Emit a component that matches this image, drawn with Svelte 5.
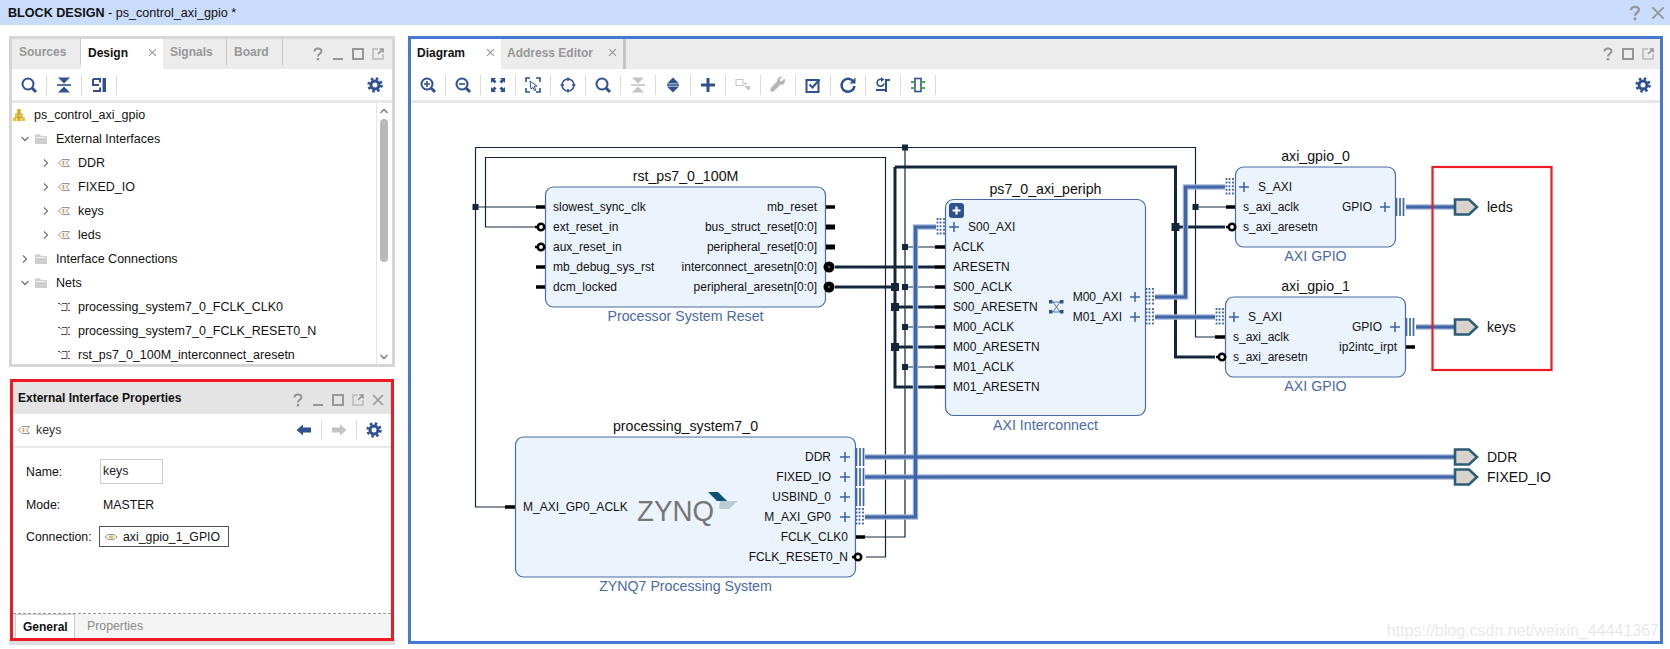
<script>
  const treeRows = [
    { lvl: 0, icon: 'root', text: 'ps_control_axi_gpio' },
    { lvl: 1, arrow: 'down', icon: 'folder', text: 'External Interfaces' },
    { lvl: 2, arrow: 'right', icon: 'port', text: 'DDR' },
    { lvl: 2, arrow: 'right', icon: 'port', text: 'FIXED_IO' },
    { lvl: 2, arrow: 'right', icon: 'port', text: 'keys' },
    { lvl: 2, arrow: 'right', icon: 'port', text: 'leds' },
    { lvl: 1, arrow: 'right', icon: 'folder', text: 'Interface Connections' },
    { lvl: 1, arrow: 'down', icon: 'folder', text: 'Nets' },
    { lvl: 2, icon: 'net', text: 'processing_system7_0_FCLK_CLK0' },
    { lvl: 2, icon: 'net', text: 'processing_system7_0_FCLK_RESET0_N' },
    { lvl: 2, icon: 'net', text: 'rst_ps7_0_100M_interconnect_aresetn' }
  ];
  const diagramTools = ['zoomin','zoomout','fit','select','target','search','collapse-off','expand','plus','addoff','wrench','check','refresh','regen','block'];

  const blocks = [
    { x: 545.5, y: 187, w: 280, h: 120, title: 'rst_ps7_0_100M', sub: 'Processor System Reset' },
    { x: 515.5, y: 437, w: 340, h: 140, title: 'processing_system7_0', sub: 'ZYNQ7 Processing System' },
    { x: 945.5, y: 199.5, w: 200, h: 216, title: 'ps7_0_axi_periph', sub: 'AXI Interconnect' },
    { x: 1235.5, y: 167, w: 160, h: 80, title: 'axi_gpio_0', sub: 'AXI GPIO' },
    { x: 1225.5, y: 297, w: 180, h: 80, title: 'axi_gpio_1', sub: 'AXI GPIO' }
  ];
  const leftLabels = [
    [553,207,'slowest_sync_clk'],[553,227,'ext_reset_in'],[553,247,'aux_reset_in'],[553,267,'mb_debug_sys_rst'],[553,287,'dcm_locked'],
    [523,507,'M_AXI_GP0_ACLK'],
    [968,227,'S00_AXI'],[953,247,'ACLK'],[953,267,'ARESETN'],[953,287,'S00_ACLK'],[953,307,'S00_ARESETN'],[953,327,'M00_ACLK'],[953,347,'M00_ARESETN'],[953,367,'M01_ACLK'],[953,387,'M01_ARESETN'],
    [1258,187,'S_AXI'],[1248,317,'S_AXI'],
    [1243,207,'s_axi_aclk'],[1243,227,'s_axi_aresetn'],[1233,337,'s_axi_aclk'],[1233,357,'s_axi_aresetn']
  ];
  const rightLabels = [
    [817,207,'mb_reset'],[817,227,'bus_struct_reset[0:0]'],[817,247,'peripheral_reset[0:0]'],[817,267,'interconnect_aresetn[0:0]'],[817,287,'peripheral_aresetn[0:0]'],
    [831,457,'DDR'],[831,477,'FIXED_IO'],[831,497,'USBIND_0'],[831,517,'M_AXI_GP0'],[848,537,'FCLK_CLK0'],[848,557,'FCLK_RESET0_N'],
    [1122,297,'M00_AXI'],[1122,317,'M01_AXI'],[1372,207,'GPIO'],[1382,327,'GPIO'],[1397,347,'ip2intc_irpt']
  ];
  const pluses = [[845,457],[845,477],[845,497],[845,517],[954,227],[1135,297],[1135,317],[1244,187],[1385,207],[1234,317],[1395,327]];
  const solidBars = [[856,457],[856,477],[856,497],[1396,207],[1406,327]];
  const dottedBars = [[856,517],[937,227],[1146,297],[1146,317],[1226,187],[1216,317]];
  const stubs = [
    [536,207,545,3.5],[536,267,545,3.5],[536,287,545,3.5],[826,207,835,3.5],[826,227,835,5],[826,247,835,5],
    [505,507,515,3.5],[856,537,865,3.5],
    [935,247,945,3.5],[935,267,945,3.5],[935,287,945,3.5],[935,307,945,3.5],[935,327,945,3.5],[935,347,945,3.5],[935,367,945,3.5],[935,387,945,3.5],
    [1226,207,1235,3.5],[1215,337,1225,3.5],[1406,347,1415,3.5]
  ];
  const negs = [[541,227],[541,247],[858,557],[1232,227],[1222,357]];
  const solids = [[829,267],[829,287]];
  const joints = [[905,147.5,6],[475.5,207,6],[905,247,6],[905,287,6],[905,327,6],[905,367,6],[1195.5,207,6],[895,287,8],[895,307,8],[895,347,8],[1175.5,227,8]];
  const ports = [[207,'leds'],[327,'keys'],[457,'DDR'],[477,'FIXED_IO']];
</script>

{#snippet help()}<svg class="ic16" viewBox="0 0 16 16"><path class="s-gray w2" d="M4.5 5.5C4.5 1.5 11.5 1.5 11.5 5.2C11.5 7.8 8 7.4 8 10.5"/><rect class="f-gray" x="6.8" y="12" width="2.4" height="2.4"/></svg>{/snippet}
{#snippet minim()}<svg class="ic16" viewBox="0 0 16 16"><path class="s-gray w2" d="M3 13H13"/></svg>{/snippet}
{#snippet maxim()}<svg class="ic16" viewBox="0 0 16 16"><rect class="s-gray w2" x="3" y="3" width="10" height="10"/></svg>{/snippet}
{#snippet popout()}<svg class="ic16" viewBox="0 0 16 16"><path class="s-lgray w2" d="M8 3H3V13H13V8"/><path class="s-gray w15" d="M8 8L13 3M9.5 3H13V6.5"/></svg>{/snippet}
{#snippet closex(cls)}<svg class={cls} viewBox="0 0 16 16"><path class="s-gray w15" d="M3 3L13 13M13 3L3 13"/></svg>{/snippet}
{#snippet gear()}<svg class="ic16" viewBox="0 0 16 16"><circle class="s-blue w3" cx="8" cy="8" r="4"/><circle class="s-blue gear-teeth" cx="8" cy="8" r="6.4"/></svg>{/snippet}
{#snippet tool(name)}
  <svg class="ic18" viewBox="0 0 18 18">
    {#if name === 'search'}<circle class="s-blue w2" cx="8" cy="8" r="5.5"/><path class="s-blue w3" d="M12 12L16 16"/>
    {:else if name === 'zoomin'}<circle class="s-blue w2" cx="8" cy="8" r="5.5"/><path class="s-blue w3" d="M12 12L16 16"/><path class="s-blue w15" d="M5 8H11M8 5V11"/>
    {:else if name === 'zoomout'}<circle class="s-blue w2" cx="8" cy="8" r="5.5"/><path class="s-blue w3" d="M12 12L16 16"/><path class="s-blue w15" d="M5 8H11"/>
    {:else if name === 'fit'}<path class="f-blue" d="M2 2H7L5.5 3.5L7.5 5.5L5.5 7.5L3.5 5.5L2 7ZM16 2V7L14.500 5.500L12.500 7.500L10.500 5.500L12.500 3.500L11 2ZM2 16V11L3.500 12.500L5.500 10.500L7.500 12.500L5.500 14.500L7 16ZM16 16H11L12.500 14.500L10.500 12.500L12.500 10.500L14.500 12.500L16 11Z"/>
    {:else if name === 'select'}<path class="s-blue w15" d="M2 6V2H6M12 2H16V6M2 12V16H6M12 16H16V12"/><path class="s-blue w1 f-white" d="M6 5L13 10L10 10.500L12 14L10.500 14.700L9 11.500L7 13Z"/>
    {:else if name === 'target'}<circle class="s-blue w15" cx="9" cy="9" r="6"/><path class="s-blue w15" d="M9 1.500V5M9 13V16.500M1.500 9H5M13 9H16.500"/>
    {:else if name === 'collapse' || name === 'collapse-off'}<path class={name === 'collapse' ? 'f-blue' : 'f-lgray'} d="M3 1.500H15L9 7.500ZM3 16.500H15L9 10.500Z"/><path class={name === 'collapse' ? 's-blue w15' : 's-lgray w15'} d="M2 9H16"/>
    {:else if name === 'expand'}<path class="f-blue" d="M9 1.500L15 7.500H3ZM9 16.500L15 10.500H3Z"/><path class="s-blue w15" d="M3 9H15"/>
    {:else if name === 'plus'}<path class="s-blue w3" d="M2 9H16M9 2V16"/>
    {:else if name === 'addoff'}<rect class="s-lgray w1" x="2" y="3.500" width="7" height="6"/><path class="s-lgray w15" d="M10 7.500H13M11 10L15 14"/><path class="f-lgray" d="M12 10H16V14Z"/>
    {:else if name === 'wrench'}<path class="f-gray2" d="M15.500 2.500L12.500 5.500L11 5L10.500 3.500L13.500 .8C10.800 .2 8 2 8.300 5.300L1.500 12.500C.5 14 2.800 16.800 4.500 15.500L11.500 8.500C15 9.500 17 6 15.500 2.500Z"/>
    {:else if name === 'check'}<rect class="s-blue w2" x="2.500" y="4" width="12" height="12"/><path class="s-blue w2" d="M5.500 8.500L8.500 11.500L15.500 3.500"/>
    {:else if name === 'refresh'}<path class="s-blue w25" d="M14 5A6.500 6.500 0 1 0 15.500 10"/><path class="f-blue" d="M16.500 1.500V7.500H10.500Z"/>
    {:else if name === 'regen'}<path class="s-blue w15" d="M10 7.500A3.500 3.500 0 1 1 8 3.500"/><path class="f-blue" d="M7 1L10.500 3.500L7 6Z"/><path class="s-blue w2" d="M2 14H11M12 16V4H16"/>
    {:else if name === 'block'}<rect class="s-blue w15" x="6" y="2.500" width="6" height="13"/><path class="s-green w2" d="M2 6H6M2 12H6M12 6H16M12 12H16"/>
    {/if}
  </svg>
{/snippet}
{#snippet treeIcon(name)}
  <svg class="ic14" viewBox="0 0 14 14">
    {#if name === 'root'}<path class="f-yellow" d="M5 1H9V5H5ZM3 5.500H7V9H3ZM7.500 5.500H11V9H7.500ZM1 9.500H4.500V13H1ZM5 9.500H9V13H5ZM9.500 9.500H13V13H9.500Z"/><path class="s-dark w05" d="M7 1V13M3 9.500H11M5 5.500H9"/>
    {:else if name === 'folder'}<path class="f-folder" d="M1 2.500H6L7 4H13V12H1Z"/><path class="f-white2" d="M2 5H12V6H2Z"/>
    {:else if name === 'port'}<path class="s-gray w1" d="M12.500 3.500H5L1.500 7L5 10.500H12.500L9.500 7Z"/><path class="s-orange w15" d="M6.500 5V9"/>
    {:else if name === 'net'}<path class="s-net w1" d="M1 3.500H3L5 5.500M5 3.500H10V10.500H4M11 3.500H13M11 10.500H13"/>
    {/if}
  </svg>
{/snippet}
{#snippet chevron(dir)}
  <svg class="chev" viewBox="0 0 10 10">
    {#if dir === 'down'}<path class="s-gray2 w12" d="M1.500 3L5 6.500L8.500 3"/>
    {:else if dir === 'up'}<path class="s-gray2 w12" d="M1.500 7L5 3.500L8.500 7"/>
    {:else}<path class="s-gray2 w12" d="M3 1.500L6.500 5L3 8.500"/>{/if}
  </svg>
{/snippet}

<div class="app">
  <header class="titlebar">
    <div class="title-text"><b>BLOCK DESIGN</b> - ps_control_axi_gpio *</div>
    <div class="title-icons">{@render help()}{@render closex('ic16')}</div>
  </header>

  <div class="workspace">
    <aside class="left">
      <section class="panel">
        <div class="tabbar">
          <div class="tab t-sources">Sources</div>
          <div class="tab active t-design">Design {@render closex('tabx')}</div>
          <div class="tab t-signals">Signals</div>
          <div class="tab t-board">Board</div>
          <div class="win">{@render help()}{@render minim()}{@render maxim()}{@render popout()}</div>
        </div>
        <div class="toolbar left-tools">
          <div class="cell">{@render tool('search')}</div>
          <div class="cell">{@render tool('collapse')}</div>
          <div class="cell">
            <svg class="ic18" viewBox="0 0 18 18"><path class="s-blue w2" d="M3 3H10V6.500M3 3V9H9M3 15H10V11.500"/><path class="f-blue" d="M12.500 2H16V16H12.500Z"/></svg>
          </div>
          <div class="tool-end">{@render gear()}</div>
        </div>
        <div class="tree-wrap">
          <div class="tree">
            {#each treeRows as r}
              <div class="row lvl{r.lvl}">
                {#if r.lvl > 0}<span class="arrow">{#if r.arrow}{@render chevron(r.arrow)}{/if}</span>{/if}
                <span class="ticon">{@render treeIcon(r.icon)}</span>
                <span>{r.text}</span>
              </div>
            {/each}
          </div>
          <div class="scroll">
            {@render chevron('up')}
            <div class="thumb"></div>
            {@render chevron('down')}
          </div>
        </div>
      </section>

      <div class="props-wrap">
        <section class="props">
          <div class="props-head">
            <b>External Interface Properties</b>
            <div class="win">{@render help()}{@render minim()}{@render maxim()}{@render popout()}{@render closex('ic16')}</div>
          </div>
          <div class="props-sub">
            <span class="ticon sub-ic">{@render treeIcon('port')}</span>
            <span>keys</span>
            <div class="sub-tools">
              <div class="cell2"><svg class="ic18" viewBox="0 0 18 18"><path class="f-blue" d="M1.500 9L8 3.500V6.500H16V11.500H8V14.500Z"/></svg></div>
              <div class="cell2"><svg class="ic18" viewBox="0 0 18 18"><path class="f-lgray" d="M16.500 9L10 3.500V6.500H2V11.500H10V14.500Z"/></svg></div>
              <div class="cell3">{@render gear()}</div>
            </div>
          </div>
          <div class="form">
            <div class="frow r-name"><span class="flabel">Name:</span><div class="input">keys</div></div>
            <div class="frow r-mode"><span class="flabel">Mode:</span><span class="mode">MASTER</span></div>
            <div class="frow r-conn"><span class="flabel">Connection:</span>
              <div class="conn">
                <svg class="ic14" viewBox="0 0 14 14"><path class="s-gray w1" d="M1 7L4 4.500H10L13 7L10 9.500H4Z"/><path class="f-orange" d="M5 5.500H9.500V8.500H5Z"/></svg>
                <span>axi_gpio_1_GPIO</span>
              </div>
            </div>
          </div>
          <div class="props-tabs">
            <div class="ptab active-p">General</div>
            <div class="ptab">Properties</div>
          </div>
        </section>
      </div>
    </aside>

    <main class="diagram-panel">
      <div class="tabbar">
        <div class="tab active t-diagram">Diagram {@render closex('tabx')}</div>
        <div class="tab t-addr">Address Editor {@render closex('tabx')}</div>
        <div class="win">{@render help()}{@render maxim()}{@render popout()}</div>
      </div>
      <div class="toolbar diag-tools">
        {#each diagramTools as t}<div class="cell">{@render tool(t)}</div>{/each}
        <div class="tool-end">{@render gear()}</div>
      </div>
      <svg class="canvas" viewBox="411 103 1249 538">
        <g class="wire-thin">
          <path d="M505 507H475.5V147.500H1195.500V337H1215"/>
          <path d="M905 147.500V537H865"/>
          <path d="M905 247H935M905 287H935M905 327H935M905 367H935M1195.500 207H1226M475.500 207H536"/>
          <path d="M536 227H485.500V157.500H885.500V557H866"/>
        </g>
        <g class="wire-thick">
          <path d="M835 267H935M835 287H895M895 167V387H935M895 307H935M895 347H935M895 167H1175.500V357H1215M1175.500 227H1225"/>
        </g>
        <g class="bus-edge">
          <path d="M865 457H1455M865 477H1455M865 517H915.500V227H936M1155 297H1185.500V187H1225M1155 317H1215M1406 207H1455M1416 327H1455"/>
        </g>
        <g class="bus-core">
          <path d="M865 457H1455M865 477H1455M865 517H915.500V227H936M1155 297H1185.500V187H1225M1155 317H1215M1406 207H1455M1416 327H1455"/>
        </g>

        {#each joints as [x, y, s]}<rect class="joint" x={x - s / 2} y={y - s / 2} width={s} height={s}/>{/each}

        {#each blocks as b}
          <rect class="block" x={b.x} y={b.y} width={b.w} height={b.h} rx="8"/>
          <text class="title" x={b.x + b.w / 2} y={b.y - 6} text-anchor="middle">{b.title}</text>
          <text class="sub" x={b.x + b.w / 2} y={b.y + b.h + 14} text-anchor="middle">{b.sub}</text>
        {/each}

        {#each stubs as [x1, y, x2, w]}<line class="stub" x1={x1} y1={y} x2={x2} y2={y} stroke-width={w}/>{/each}
        {#each negs as [x, y]}<path class="stub-tip" d="M{x - 6} {y}H{x}"/><circle class="neg" cx={x} cy={y} r="3.200"/>{/each}
        {#each solids as [x, y]}<circle class="solid" cx={x} cy={y} r="5.500"/><circle class="solid-dot" cx={x} cy={y} r=".7"/>{/each}

        {#each pluses as [x, y]}<path class="plus" d="M{x - 5} {y}H{x + 5}M{x} {y - 5}V{y + 5}"/>{/each}
        {#each solidBars as [x, y]}<path class="bars" d="M{x + .5} {y - 9}V{y + 9}M{x + 4} {y - 9}V{y + 9}M{x + 7.500} {y - 9}V{y + 9}"/>{/each}
        {#each dottedBars as [x, y]}<path class="bars dotted" d="M{x + .5} {y - 9}V{y + 9}M{x + 3.500} {y - 9}V{y + 9}M{x + 7} {y - 9}V{y + 9}"/>{/each}

        {#each leftLabels as [x, y, t]}<text class="lbl" x={x} y={y + 4}>{t}</text>{/each}
        {#each rightLabels as [x, y, t]}<text class="lbl" x={x} y={y + 4} text-anchor="end">{t}</text>{/each}

        <rect class="expand-btn" x="949" y="203" width="15" height="15" rx="3"/>
        <path class="expand-plus" d="M952.500 210.500H960.500M956.500 206.500V214.500"/>

        <g class="crossbar">
          <rect x="1049" y="300" width="3.500" height="3.500"/><rect x="1060" y="300" width="3.500" height="3.500"/>
          <rect x="1049" y="310" width="3.500" height="3.500"/><rect x="1060" y="310" width="3.500" height="3.500"/>
          <path d="M1053 302H1060M1053 312H1060M1053 302L1060 312M1060 302L1053 312"/>
        </g>

        <text class="zynq" x="637" y="521" textLength="77" lengthAdjust="spacingAndGlyphs">ZYNQ</text>
        <path class="swoosh-d" d="M708 492H718L727 501H717Z"/>
        <path class="swoosh-l" d="M720 501H738L729 509H719Z"/>

        {#each ports as [y, t]}
          <path class="port" d="M1455 {y - 7.500}H1469L1477 {y}L1469 {y + 7.500}H1455Z"/>
          <text class="port-lbl" x="1487" y={y + 5}>{t}</text>
        {/each}

        <rect class="redbox" x="1432.500" y="167" width="119" height="203"/>
        <text class="wm" x="1659" y="636" text-anchor="end">https://blog.csdn.net/weixin_44441367</text>
      </svg>
    </main>
  </div>
</div>

<style>
  :global(body) { margin: 0; background: #fff; }
  .app { width: 1670px; height: 649px; overflow: hidden; font-family: "Liberation Sans", Arial, sans-serif; font-size: 12.3px; color: #111; background: #fff; }

  .titlebar { height: 25px; background: #c9dcfb; display: flex; align-items: center; padding: 0 3px 0 8px; }
  .title-text { font-size: 12.6px; }
  .title-icons { margin-left: auto; display: flex; gap: 5px; }
  .title-icons svg { width: 18px; height: 18px; }

  .workspace { display: flex; margin-top: 11px; padding-left: 9px; gap: 13px; }
  .left { width: 386px; display: flex; flex-direction: column; gap: 11px; }

  .panel { height: 331px; box-sizing: border-box; border: 3px solid #d6d6d6; display: flex; flex-direction: column; }
  .tabbar { height: 30px; flex: none; background: #ececec; display: flex; align-items: stretch; font-size: 12px; font-weight: bold; color: #979797; }
  .tab { display: flex; align-items: center; padding-left: 7px; box-sizing: border-box; }
  .tab.active { background: #fff; color: #111; padding-bottom: 3px; }
  .t-sources { width: 69px; border-right: 1px solid #c8c8c8; margin-bottom: 4px; }
  .t-design { width: 82px; }
  .t-signals { width: 64px; border-right: 1px solid #c8c8c8; margin-bottom: 4px; }
  .t-board { width: 56px; border-right: 1px solid #c8c8c8; margin-bottom: 4px; }
  .t-diagram { width: 90px; padding-left: 6px; }
  .t-addr { width: 125px; padding-left: 6px; padding-bottom: 3px; border-right: 3px solid #c4c4c4; }
  .tabx { width: 11px; height: 11px; margin-left: auto; margin-right: 5px; }
  .win { margin-left: auto; display: flex; align-items: center; padding-right: 6px; gap: 4px; }

  .toolbar { height: 31px; flex: none; display: flex; align-items: center; background: #fff; border-bottom: 3px solid #e8e8e8; }
  .cell { width: 35px; display: flex; justify-content: center; align-items: center; height: 20px; border-right: 1px solid #dcdcdc; box-sizing: border-box; }
  .tool-end { margin-left: auto; display: flex; padding-right: 9px; }

  .tree-wrap { flex: 1; display: flex; min-height: 0; }
  .tree { flex: 1; overflow: hidden; }
  .row { height: 24px; display: flex; align-items: center; white-space: nowrap; font-size: 12.5px; }
  .arrow { width: 10px; display: flex; justify-content: center; }
  .ticon { display: flex; }
  .lvl0 .ticon { width: 22px; }
  .lvl1 { padding-left: 8px; }
  .lvl1 .ticon { width: 26px; padding-left: 4px; box-sizing: border-box; }
  .lvl2 { padding-left: 29px; }
  .lvl2 .ticon { width: 27px; padding-left: 6px; box-sizing: border-box; }
  .scroll { width: 13px; border-left: 1px solid #e6e6e6; display: flex; flex-direction: column; align-items: center; padding: 3px 2px 2px 0; }
  .thumb { width: 8px; height: 143px; margin: 3px 0 auto; background: #b9b9b9; border-radius: 4px; }

  .props-wrap { height: 267px; background: linear-gradient(#ddd, #ddd) bottom / 100% 6px no-repeat; padding: 1px 1px 0; box-sizing: border-box; }
  .props { height: 262px; box-sizing: border-box; border: 3px solid #ed1c24; background: #fff; display: flex; flex-direction: column; }
  .props-head { height: 32px; flex: none; background: #e4e4e4; display: flex; align-items: center; padding-left: 5px; font-size: 12px; }
  .props-head .win { padding-right: 5px; padding-top: 4px; }
  .props-sub { height: 32px; flex: none; display: flex; align-items: center; border-bottom: 2px solid #e8e8e8; padding-left: 4px; color: #333; }
  .sub-ic { width: 19px; }
  .sub-tools { margin-left: auto; display: flex; align-items: center; }
  .cell2 { width: 35px; height: 20px; display: flex; justify-content: center; align-items: center; border-right: 1px solid #dcdcdc; box-sizing: border-box; }
  .cell3 { width: 34px; display: flex; justify-content: center; }

  .form { flex: 1; padding: 11px 0 0 13px; display: flex; flex-direction: column; border-bottom: 1px dashed #999; }
  .frow { display: flex; align-items: center; }
  .flabel { width: 74px; flex: none; }
  .r-name { height: 25px; }
  .r-mode { height: 24px; margin-top: 9px; }
  .r-conn { height: 21px; margin-top: 9px; }
  .input { width: 63px; height: 25px; box-sizing: border-box; border: 1.5px solid #ccc; line-height: 22px; padding-left: 2px; color: #222; }
  .mode { padding-left: 3px; }
  .conn { margin-left: -1px; width: 130px; height: 21px; box-sizing: border-box; border: 1px solid #555; display: flex; align-items: center; gap: 5px; padding-left: 4px; }

  .props-tabs { height: 24px; flex: none; background: #f4f4f4; display: flex; padding-left: 2px; font-size: 12.3px; color: #8a8a8a; }
  .ptab { display: flex; align-items: center; padding: 0 7px; }
  .active-p { background: #fff; border: 1px solid #ccc; border-bottom: none; color: #111; font-weight: bold; font-size: 12px; width: 60px; box-sizing: border-box; margin-right: 5px; }

  .diagram-panel { width: 1255px; height: 608px; box-sizing: border-box; border: 3px solid #4678d2; display: flex; flex-direction: column; }
  .diagram-panel .win { padding-right: 4px; }
  .canvas { display: block; width: 1249px; height: 538px; }

  svg { flex: none; }
  .ic16 { width: 16px; height: 16px; display: block; }
  .ic18 { width: 18px; height: 18px; display: block; }
  .ic14 { width: 14px; height: 14px; display: block; }
  .chev { width: 10px; height: 10px; display: block; }

  path, rect, circle { fill: none; }
  .s-gray { stroke: #969696; } .s-lgray { stroke: #c4c4c4; } .s-gray2 { stroke: #777; }
  .s-blue { stroke: #2f5190; } .s-green { stroke: #3fae49; } .s-dark { stroke: #8a6d00; }
  .s-orange { stroke: #e89a2c; } .s-net { stroke: #555; }
  .w05 { stroke-width: .5; } .w1 { stroke-width: 1; } .w12 { stroke-width: 1.3; } .w15 { stroke-width: 1.6; }
  .w2 { stroke-width: 2; } .w25 { stroke-width: 2.5; } .w3 { stroke-width: 3; }
  .gear-teeth { stroke-width: 2.6; stroke-dasharray: 2.5 2.53; }
  .f-gray { fill: #969696; } .f-blue { fill: #2f5190; } .f-lgray { fill: #c4c4c4; } .f-gray2 { fill: #b4b4b4; }
  .f-white { fill: #fff; } .f-white2 { fill: #eee; } .f-yellow { fill: #e7c23c; } .f-folder { fill: #cfcfcf; }
  .f-orange { fill: #e8b06a; }

  .wire-thin path { stroke: #14263c; stroke-width: 1.2; }
  .wire-thick path { stroke: #14263c; stroke-width: 3; }
  .bus-edge path { stroke: #a4b5d6; stroke-width: 5.5; }
  .bus-core path { stroke: #4166a8; stroke-width: 3.2; }
  .joint { fill: #14263c; }
  .block { fill: #ebf3fd; stroke: #4a6aa8; stroke-width: 1.2; }
  .title { font-size: 14.2px; fill: #111; }
  .sub { font-size: 14.2px; fill: #4a6aa8; }
  .lbl { font-size: 12px; fill: #111; }
  .stub { stroke: #000; }
  .stub-tip { stroke: #000; stroke-width: 2.5; }
  .neg { fill: #fff; stroke: #000; stroke-width: 2.6; }
  .solid { fill: #000; }
  .solid-dot { fill: #fff; }
  .plus { stroke: #3e62a2; stroke-width: 1.5; }
  .bars { stroke: #3e66a8; stroke-width: 1.7; }
  .dotted { stroke-dasharray: 2 1.6; stroke-width: 1.8; }
  .expand-btn { fill: #2f5190; }
  .expand-plus { stroke: #fff; stroke-width: 2.2; }
  .crossbar rect { fill: #2f5190; }
  .crossbar path { stroke: #2f5190; stroke-width: .8; }
  .zynq { font-size: 30px; fill: #767676; }
  .swoosh-d { fill: #0b5475; }
  .swoosh-l { fill: #bccbd6; }
  .port { fill: #d8d1cc; stroke: #2a5f75; stroke-width: 2.6; }
  .port-lbl { font-size: 14px; fill: #111; }
  .redbox { stroke: #ed1c24; stroke-width: 2.2; }
  .wm { font-size: 16px; fill: #e9e9e9; }
</style>
